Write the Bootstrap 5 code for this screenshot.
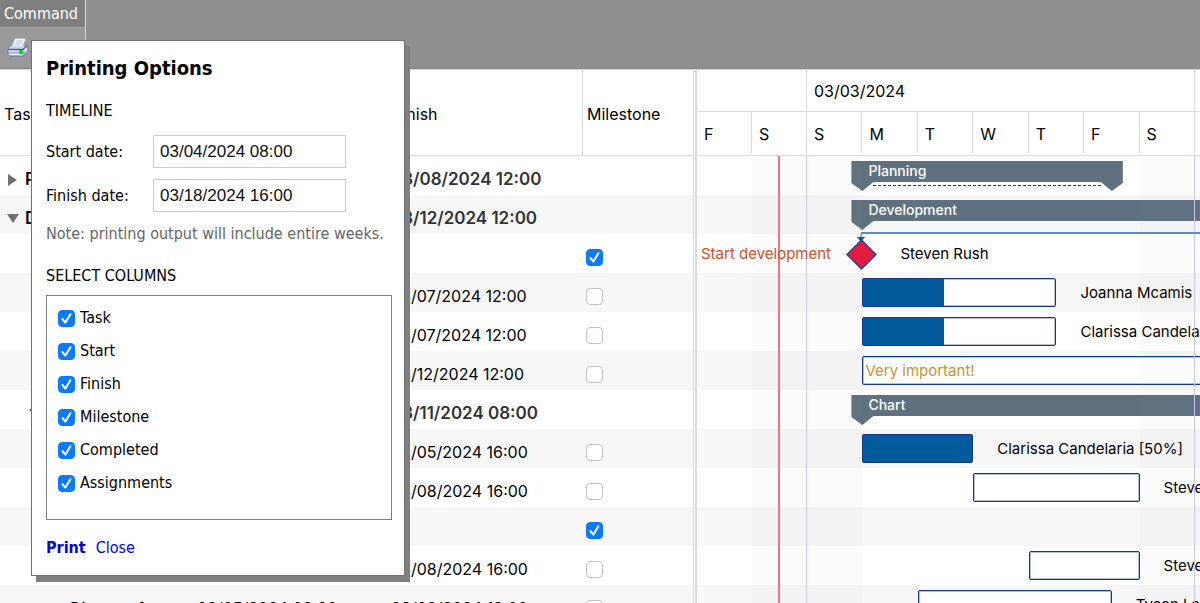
<!DOCTYPE html>
<html lang="en">
<head>
<meta charset="utf-8">
<meta name="viewport" content="width=device-width, initial-scale=1">
<title>Project schedule</title>
<link href="https://cdn.jsdelivr.net/npm/bootstrap@5.3.0/dist/css/bootstrap.min.css" rel="stylesheet">
<style>
  :root { --day: calc(388px / 7); --rowh: 39px; --rule: #dadada; }
  body { font: 16px/20px Inter, "Liberation Sans", sans-serif; color: #000; background: #fff; }

  /* ribbon */
  .ribbon { background: #8f8f8f; height: 69px; border-bottom: 1px solid #868686; }
  .ribbon-group { width: 86px; border-right: 1px solid #d4d4d4; font: 16px/20px "DejaVu Sans Condensed", sans-serif; }
  .ribbon-title { background: #7f7f7f; color: #fff; padding: 4px; height: 28px; border-bottom: 1px solid #a8a8a8; }
  .ribbon-tools { background: #999; padding: 9px 7px; }

  /* task list */
  .task-pane { width: 694px; border-right: 1px solid var(--rule); }
  .task-grid { width: 693px; table-layout: fixed; border-collapse: separate; border-spacing: 0; }
  .task-grid th { height: 87px; font-weight: 400; padding: 3px 4px 0; vertical-align: middle; border-bottom: 1px solid var(--rule); border-top: 1px solid var(--rule); border-right: 1px solid var(--rule); }
  .task-grid th:last-child { border-right: 0; }
  .task-grid td { height: var(--rowh); padding: 7px 2px 0; vertical-align: middle; white-space: nowrap; overflow: hidden; }
  .task-grid tbody tr:nth-child(even) { background: #f7f7f7; }
  .task-grid .summary td { font-weight: 600; font-size: 17px; color: #333; }
  .task-grid .summary .task-name { color: #000; }
  .task-grid .level-0 { padding-left: 7px; }
  .task-grid .level-1 { padding-left: 29px; }
  .task-grid .level-2 { padding-left: 70px; }
  .arrow { width: 12px; height: 12px; margin-right: 6px; vertical-align: -1px; fill: #707070; }

  .tick { appearance: none; width: 17px; height: 17px; margin: 0; flex: none; display: block; border: 1px solid #c2c2c2; border-radius: 4px; background: #fff; }
  .tick:checked { border-color: #0a7bff; background: #0a7bff url("data:image/svg+xml,%3Csvg xmlns='http://www.w3.org/2000/svg' viewBox='0 0 15 15'%3E%3Cpath d='M3.4 8l3 3.6 5-8.4' fill='none' stroke='white' stroke-width='2' stroke-linecap='round' stroke-linejoin='round'/%3E%3C/svg%3E") center / 100% no-repeat; }
  .task-grid .tick { margin-left: 1px; }

  /* timeline */
  .timeline { margin-left: 1px; border-left: 2px solid var(--rule); min-width: 0; }
  .timeline-head { height: 87px; border-top: 1px solid var(--rule); border-bottom: 1px solid var(--rule); }
  .week { flex: none; width: 388px; border-right: 1px solid var(--rule); }
  .week-part { width: 110px; }
  .week-name { height: 42px; padding: 11px 7px; border-bottom: 1px solid var(--rule); }
  .week-days { height: 43px; }
  .week-days span { flex: 1 1 0; padding: 12px 7px 0; margin-bottom: 2px; border-right: 1px solid var(--rule); }
  .week-days span:last-child { border-right: 0; }

  .lanes { position: relative; overflow: hidden; background: #fff; }
  .lane { position: relative; height: var(--rowh); }
  .lane:nth-child(even) { background: #f7f7f7; }
  .stripe { position: absolute; top: 0; bottom: 0; background: #80808009; left: calc(110px + var(--day) * var(--from)); width: calc(var(--day) * var(--days)); }
  .week-line, .now-line { position: absolute; top: 0; bottom: 0; width: 1px; background: #cbc3f0; left: calc(109px + 388px * var(--from)); }
  .now-line { width: 2px; background: #f4717f; left: 81px; }

  /* --from counts days from the Sunday that begins the first full week */
  .bar { position: absolute; top: 5px; height: 29px; left: calc(110px + var(--day) * var(--from)); width: calc(var(--day) * var(--days)); background: #fff; border: 1px solid #12388c; border-radius: 2px; box-shadow: inset 0 0 0 1px #12388c50; }
  .bar-done { height: 100%; width: calc(var(--done) * 1%); background: #005a9c; }
  .bar-label { position: absolute; left: 100%; top: 4px; margin-left: 25px; white-space: nowrap; font-size: 15px; }
  .bar-note { padding: 4px 2px; color: #cb922f; font-size: 15px; }
  .span-bar { position: absolute; top: 5px; height: 30px; left: calc(99px + var(--day) * var(--from)); width: calc(22px + var(--day) * var(--days)); color: #fff; font-size: 14px; font-weight: 500; }
  .span-shape { position: absolute; inset: 0; background: #5f717f; clip-path: polygon(0 0, 100% 0, 100% 22px, calc(100% - 11px) 100%, calc(100% - 22px) 21px, 22px 21px, 11px 100%, 0 22px); }
  .span-text { position: relative; padding-left: 17px; }
  .span-dash { position: absolute; left: 22px; right: 22px; top: 24px; border-top: 1px dashed #12388c; }
  .milestone { position: absolute; top: 0; left: calc(94px + var(--day) * var(--from)); width: 32px; height: 36px; }
  .link-line { position: absolute; top: 76px; right: 0; height: 2px; background: #5c8cbd; left: calc(109px + var(--day)); }
  .milestone-name { position: absolute; left: 4px; top: 10px; color: #d2531c; font-size: 15px; }
  .milestone-who { position: absolute; left: calc(148px + var(--day)); top: 10px; font-size: 15px; }

  /* print dialog */
  .print-dialog { position: absolute; left: 31px; top: 40px; width: 374px; padding: 15px 12px 17px 14px; background: #fff; border: 1px solid #707070; box-shadow: 5px 6px 0 #7f7f7f; font: 16px/20px "DejaVu Sans Condensed", sans-serif; z-index: 5; margin: 0; }
  .print-dialog h1 { font-size: 20px; line-height: 24px; font-weight: 700; margin: 0 0 21px; }
  .print-dialog h2 { font-size: 16px; line-height: 20px; font-weight: 400; margin: 0; }
  .dates { padding: 14px 0 12px; gap: 11px; }
  .date-row label { width: 107px; }
  .date-row input { width: 193px; height: 33px; padding: 0 6px; border: 1px solid #ccc; font: 17px/20px "Liberation Sans", sans-serif; color: #111; }
  .week-note { color: #666; padding-bottom: 22px; }
  .column-list { height: 225px; margin: 9px 0 18px; padding: 10px 11px; border: 1px solid #808080; }
  .column-list label { height: 33px; padding-bottom: 9px; gap: 5px; }
  .dialog-links { gap: 10px; }
  .print-dialog a { color: #0000e6; text-decoration: none; }
</style>
<script src="https://cdn.jsdelivr.net/npm/bootstrap@5.3.0/dist/js/bootstrap.bundle.min.js"></script>
</head>
<body class="vh-100 overflow-hidden position-relative d-flex flex-column">

<header class="ribbon d-flex flex-shrink-0">
  <div class="ribbon-group d-flex flex-column">
    <div class="ribbon-title">Command</div>
    <div class="ribbon-tools flex-grow-1">
      <button type="button" class="border-0 bg-transparent p-0 d-block" aria-label="Print">
        <svg width="22" height="22" viewBox="0 0 22 22" class="d-block">
          <defs><linearGradient id="shell" x1="0" y1="0" x2="0" y2="1"><stop offset="0" stop-color="#f4f8ff"/><stop offset=".5" stop-color="#c3d0ec"/><stop offset="1" stop-color="#7488b6"/></linearGradient></defs>
          <path d="M4 8.500h14l2.500 1v5l-4 5H3l-2-2v-5z" fill="url(#shell)" stroke="#6d7fab" stroke-width=".8"/>
          <path d="M1.500 12.300h14.500l4-3.300" fill="none" stroke="#46557e" stroke-width="1.300"/>
          <path d="M8 1.500h11l-3.500 8.500H4.500z" fill="#f7faff" stroke="#a3b2d6" stroke-width=".8"/>
          <path d="M9.500 4h6.500M8.500 6h6.500M7.500 8h6" stroke="#a9b9dc" stroke-width=".9"/>
          <path d="M2.500 17.500h13" stroke="#eef3fd" stroke-width="1.500"/>
          <rect x="12" y="13" width="4" height="4" fill="#19d11d"/>
        </svg>
      </button>
    </div>
  </div>
</header>

<main class="d-flex flex-grow-1 overflow-hidden">
  <section class="task-pane flex-shrink-0">
    <table class="task-grid">
      <colgroup><col style="width:195px"><col style="width:194px"><col style="width:194px"><col></colgroup>
      <thead><tr><th>Task</th><th></th><th>Finish</th><th>Milestone</th></tr></thead>
      <tbody>
        <tr class="summary"><td class="task-name level-0"><svg class="arrow" viewBox="0 0 12 12"><path d="M1 0l9 6-9 6z"/></svg>Planning</td><td></td><td>03/08/2024 12:00</td><td></td></tr>
        <tr class="summary"><td class="task-name level-0"><svg class="arrow" viewBox="0 0 12 12"><path d="M0 1h12l-6 9z"/></svg>Development</td><td></td><td>03/12/2024 12:00</td><td></td></tr>
        <tr><td></td><td></td><td></td><td><input class="tick" type="checkbox" aria-label="Milestone" checked></td></tr>
        <tr><td></td><td></td><td>03/07/2024 12:00</td><td><input class="tick" type="checkbox" aria-label="Milestone"></td></tr>
        <tr><td></td><td></td><td>03/07/2024 12:00</td><td><input class="tick" type="checkbox" aria-label="Milestone"></td></tr>
        <tr><td></td><td></td><td>03/12/2024 12:00</td><td><input class="tick" type="checkbox" aria-label="Milestone"></td></tr>
        <tr class="summary"><td class="task-name level-1"><svg class="arrow" viewBox="0 0 12 12"><path d="M0 1h12l-6 9z"/></svg></td><td></td><td>03/11/2024 08:00</td><td></td></tr>
        <tr><td></td><td></td><td>03/05/2024 16:00</td><td><input class="tick" type="checkbox" aria-label="Milestone"></td></tr>
        <tr><td></td><td></td><td>03/08/2024 16:00</td><td><input class="tick" type="checkbox" aria-label="Milestone"></td></tr>
        <tr><td></td><td></td><td></td><td><input class="tick" type="checkbox" aria-label="Milestone" checked></td></tr>
        <tr><td></td><td></td><td>03/08/2024 16:00</td><td><input class="tick" type="checkbox" aria-label="Milestone"></td></tr>
        <tr><td class="level-2">Diagram for</td><td>03/05/2024 08:00</td><td>03/08/2024 12:00</td><td><input class="tick" type="checkbox" aria-label="Milestone"></td></tr>
      </tbody>
    </table>
  </section>

  <section class="timeline flex-grow-1 overflow-hidden">
    <div class="timeline-head d-flex overflow-hidden">
      <div class="week week-part"><div class="week-name"></div><div class="week-days d-flex"><span>F</span><span>S</span></div></div>
      <div class="week"><div class="week-name">03/03/2024</div><div class="week-days d-flex"><span>S</span><span>M</span><span>T</span><span>W</span><span>T</span><span>F</span><span>S</span></div></div>
      <div class="week"><div class="week-name"></div><div class="week-days"></div></div>
    </div>
    <div class="lanes">
      <div class="lane"><div class="span-bar" style="--from:1;--days:4.5"><div class="span-dash"></div><div class="span-shape"></div><div class="span-text">Planning</div></div></div>
      <div class="lane"><div class="span-bar" style="--from:1;--days:8.5"><div class="span-shape"></div><div class="span-text">Development</div></div></div>
      <div class="lane"></div>
      <div class="lane"><div class="bar" style="--from:1;--days:3.5"><div class="bar-done" style="--done:42"></div><span class="bar-label">Joanna Mcamis</span></div></div>
      <div class="lane"><div class="bar" style="--from:1;--days:3.5"><div class="bar-done" style="--done:42"></div><span class="bar-label">Clarissa Candelaria</span></div></div>
      <div class="lane"><div class="bar" style="--from:1;--days:8.5"><div class="bar-note">Very important!</div></div></div>
      <div class="lane"><div class="span-bar" style="--from:1;--days:7"><div class="span-shape"></div><div class="span-text">Chart</div></div></div>
      <div class="lane"><div class="bar" style="--from:1;--days:2"><div class="bar-done" style="--done:100"></div><span class="bar-label">Clarissa Candelaria [50%]</span></div></div>
      <div class="lane"><div class="bar" style="--from:3;--days:3"><span class="bar-label">Steven Rush</span></div></div>
      <div class="lane"></div>
      <div class="lane"><div class="bar" style="--from:4;--days:2"><span class="bar-label">Steven Rush</span></div></div>
      <div class="lane"><div class="bar" style="--from:2;--days:3.5"><span class="bar-label">Tyson Lamberson</span></div></div>
      <div class="stripe" style="--from:-1;--days:2"></div>
      <div class="stripe" style="--from:6;--days:2"></div>
      <div class="week-line" style="--from:0"></div>
      <div class="week-line" style="--from:1"></div>
      <div class="now-line"></div>
      <div class="link-line"></div>
      <div class="position-absolute start-0 w-100" style="top:calc(var(--rowh) * 2)">
        <span class="milestone-name">Start development</span>
        <svg class="milestone" style="--from:1" viewBox="0 0 32 36"><path d="M15 0v5" stroke="#0f58a0"/><path d="M11 3h8l-4 5z" fill="#0f58a0"/><path d="M15.500 6l14.500 14.500-14.500 14.500-14.500-14.500z" fill="#e31b3d" stroke="#0f4c98" stroke-width="1.300"/></svg>
        <span class="milestone-who">Steven Rush</span>
      </div>
    </div>
  </section>
</main>

<form class="print-dialog" role="dialog" aria-labelledby="print-title">
  <h1 id="print-title">Printing Options</h1>
  <h2>TIMELINE</h2>
  <div class="dates d-flex flex-column">
    <div class="date-row d-flex align-items-center"><label for="start">Start date:</label><input id="start" type="text" value="03/04/2024 08:00"></div>
    <div class="date-row d-flex align-items-center"><label for="finish">Finish date:</label><input id="finish" type="text" value="03/18/2024 16:00"></div>
  </div>
  <div class="week-note text-nowrap">Note: printing output will include entire weeks.</div>
  <h2>SELECT COLUMNS</h2>
  <div class="column-list">
    <label class="d-flex align-items-center"><input class="tick" type="checkbox" checked>Task</label>
    <label class="d-flex align-items-center"><input class="tick" type="checkbox" checked>Start</label>
    <label class="d-flex align-items-center"><input class="tick" type="checkbox" checked>Finish</label>
    <label class="d-flex align-items-center"><input class="tick" type="checkbox" checked>Milestone</label>
    <label class="d-flex align-items-center"><input class="tick" type="checkbox" checked>Completed</label>
    <label class="d-flex align-items-center"><input class="tick" type="checkbox" checked>Assignments</label>
  </div>
  <div class="dialog-links d-flex"><a href="#print" class="fw-bold">Print</a><a href="#close">Close</a></div>
</form>
</body>
</html>
